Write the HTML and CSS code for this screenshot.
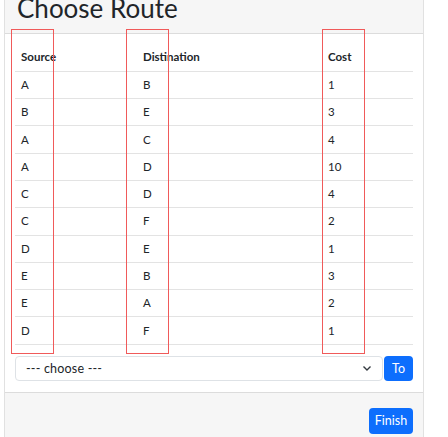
FILE: index.html
```html
<!DOCTYPE html>
<html>
<head>
<meta charset="utf-8">
<link rel="stylesheet" href="styles.css">
</head>
<body>
<div class="modal">
  <div class="modal-header"><h2 class="title">Choose Route</h2></div>
  <div class="modal-body">
    <table class="routes">
      <thead>
        <tr><th class="c1">Source</th><th class="c2">Distination</th><th class="c3">Cost</th></tr>
      </thead>
      <tbody>
        <tr><td>A</td><td>B</td><td>1</td></tr>
        <tr><td>B</td><td>E</td><td>3</td></tr>
        <tr><td>A</td><td>C</td><td>4</td></tr>
        <tr><td>A</td><td>D</td><td>10</td></tr>
        <tr><td>C</td><td>D</td><td>4</td></tr>
        <tr><td>C</td><td>F</td><td>2</td></tr>
        <tr><td>D</td><td>E</td><td>1</td></tr>
        <tr><td>E</td><td>B</td><td>3</td></tr>
        <tr><td>E</td><td>A</td><td>2</td></tr>
        <tr><td>D</td><td>F</td><td>1</td></tr>
      </tbody>
    </table>
    <div class="input-group">
      <div class="select"><span class="sel-text">--- choose ---</span>
        <svg class="chev" width="10" height="8" viewBox="0 0 10 8"><path d="M1.5 2.5 L5 6 L8.5 2.5" fill="none" stroke="#343a40" stroke-width="1.4"/></svg>
      </div>
      <button class="btn">To</button>
    </div>
  </div>
  <div class="modal-footer"><button class="btn">Finish</button></div>
</div>
<div class="mark m1"></div>
<div class="mark m2"></div>
<div class="mark m3"></div>
</body>
</html>
```
FILE: styles.css
```css
html, body {
  margin: 0;
  padding: 0;
  background: #fff;
  font-family: Lato, "Noto Sans", sans-serif;
  color: #212529;
}
.modal {
  margin-left: 4px;
  margin-top: -11px;
  width: 420px;
  box-sizing: border-box;
  border: 1px solid #e1e1e1;
  border-top: none;
  background: #fff;
}
.modal-header {
  background: #f6f6f6;
  border-bottom: 1px solid #dcdcdc;
  padding: 2px 10px 8px 12px;
}
.title {
  margin: 0;
  font-weight: 400;
  font-size: 26px;
  line-height: 34px;
  color: #212529;
}
.modal-body {
  padding: 10px 10px 11px 10px;
}
.routes {
  width: 398px;
  border-collapse: collapse;
  font-size: 11.5px;
  table-layout: fixed;
}
.routes tr { height: 27.3px; }
.routes th, .routes td {
  text-align: left;
  padding: 0 6px;
  line-height: 18px;
  border-bottom: 1px solid #e3e3e3;
  vertical-align: middle;
  color: #212529;
}
.routes th { font-weight: 700; }
.c1 { width: 110px; }
.c2 { width: 173px; }
.c3 { width: 79px; }
.input-group {
  display: flex;
  gap: 1px;
  margin-top: 11px;
}
.select {
  flex: 1;
  height: 25px;
  box-sizing: border-box;
  border: 1px solid #dee2e6;
  border-radius: 4px;
  display: flex;
  align-items: center;
  justify-content: space-between;
  padding: 0 10px 0 10px;
  font-size: 12.5px;
}
.sel-text { font-variant-ligatures: none; letter-spacing: 0.2px; }
.btn {
  background: #0d6efd;
  color: #fff;
  border: none;
  border-radius: 4px;
  font-family: inherit;
  font-size: 12.5px;
  padding: 0 8px;
  height: 25px;
}
.modal-footer {
  background: #f6f6f6;
  border-top: 1px solid #dcdcdc;
  padding: 15px 10px 20px;
  display: flex;
  justify-content: flex-end;
}
.modal-footer .btn { height: 26px; width: 44px; padding: 0; }
.mark {
  position: absolute;
  top: 29px;
  height: 323px;
  border: 1px solid #f05a5a;
}
.m1 { left: 11px; width: 41px; }
.m2 { left: 126px; width: 41px; }
.m3 { left: 322px; width: 41px; }
```
